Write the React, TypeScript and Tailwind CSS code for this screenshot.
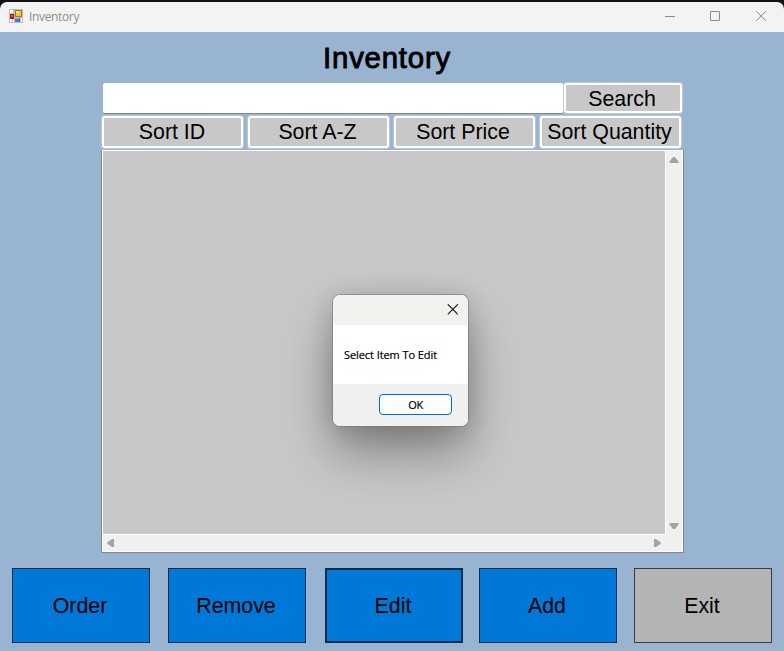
import type { ReactNode } from "react";

function AppIcon() {
  return (
    <svg width="14" height="14" viewBox="0 0 14 14" shapeRendering="crispEdges">
      <rect x="0" y="0" width="14" height="14" fill="#bdbdbd" />
      <rect x="1" y="1" width="3" height="3" fill="#f6f6f6" />
      <rect x="1" y="10" width="2" height="3" fill="#fff" />
      <rect x="4" y="10" width="1" height="3" fill="#fff" />
      <rect x="12" y="9" width="1" height="4" fill="#fff" />
      <rect x="6" y="1" width="7" height="7" fill="#a57a1c" />
      <rect x="7" y="2" width="5" height="5" fill="#f7c52c" />
      <rect x="7" y="2" width="3" height="2" fill="#fde07a" />
      <rect x="1" y="5" width="4" height="5" fill="#a81a10" />
      <rect x="2" y="6" width="2" height="2" fill="#e8604c" />
      <rect x="6" y="9" width="5" height="4" fill="#3f78dc" />
      <rect x="6" y="9" width="4" height="1" fill="#86aef2" />
    </svg>
  );
}

function TitleBar() {
  return (
    <header className="h-8 shrink-0 bg-[#12121a] pt-[2px]">
      <div className="flex h-[30px] items-center rounded-t-[7px] bg-[#f3f3f3] pl-[9px]">
        <span className="-mt-[2px]">
          <AppIcon />
        </span>
        <span className="ml-[6px] flex-1 font-['Open_Sans','Noto_Sans',sans-serif] text-[12px] leading-4 tracking-[-0.35px] text-[#8d8d8d]">
          Inventory
        </span>
        <svg width="119" height="12" viewBox="0 0 119 12" fill="none" stroke="#8b8b8b">
          <path d="M0 5.5h10" />
          <rect x="45.5" y="0.5" width="9" height="9" rx="0.4" />
          <path d="M91.3 0.2l9.6 9.6M100.9 0.2l-9.6 9.6" />
        </svg>
      </div>
    </header>
  );
}

function GreyButton({ children, className }: { children: ReactNode; className: string }) {
  return (
    <button
      className={`rounded-[3px] border-2 border-white bg-[#c8c8c8] text-center shadow-[0_0_1px_1px_rgba(225,232,240,0.45)] ${className}`}
    >
      {children}
    </button>
  );
}

function ActionButton({ children, className }: { children: ReactNode; className: string }) {
  return (
    <button className={`flex h-[75px] w-[138px] items-center justify-center pr-[2px] ${className}`}>
      {children}
    </button>
  );
}

function ItemList() {
  return (
    <div className="mt-[2px] ml-[101px] flex h-[403px] w-[583px] flex-col border border-t-0 border-[#848890]">
      <div className="flex flex-1 flex-col border border-white">
        <div className="flex flex-1">
          <div className="flex-1 border-r border-b border-white bg-[#c8c8c8]" />
          <div className="flex w-[16px] flex-col items-center justify-between bg-[#f0f0f0] pt-[6px] pb-[6px]">
            <svg width="10" height="6" viewBox="0 0 10 6">
              <path d="M4 0h2l3.5 4.5v1.5h-9V4.5z" fill="#a3a3a3" />
            </svg>
            <svg width="10" height="6" viewBox="0 0 10 6">
              <path d="M4 6h2l3.5-4.5V0h-9v1.5z" fill="#a3a3a3" />
            </svg>
          </div>
        </div>
        <div className="flex h-[16px] items-center justify-between bg-[#f0f0f0] pr-[21px] pl-[4px]">
          <svg width="7" height="8" viewBox="0 0 7 8">
            <path d="M0.3 3.2v1.6L5 8h2V0H5z" fill="#a3a3a3" />
          </svg>
          <svg width="7" height="8" viewBox="0 0 7 8">
            <path d="M6.7 3.2v1.6L2 8H0V0h2z" fill="#a3a3a3" />
          </svg>
        </div>
      </div>
    </div>
  );
}

function MessageDialog() {
  return (
    <div className="absolute top-[295px] left-[333px] flex h-[131px] w-[135px] flex-col overflow-hidden rounded-[7px] bg-white font-['Open_Sans','Noto_Sans',sans-serif] text-[11px] shadow-[0_0_0_1px_rgba(120,120,120,0.6),0_26px_50px_rgba(0,0,0,0.36),0_2px_26px_rgba(0,0,0,0.14)]">
      <div className="flex h-[30px] justify-end bg-[#f3f2ee] pt-[9px] pr-[10px]">
        <svg width="11" height="11" viewBox="0 0 11 11" fill="none" stroke="#1a1a1a" strokeWidth="1.1">
          <path d="M0.8 0.3l10 10M10.8 0.3l-10 10" />
        </svg>
      </div>
      <p className="h-[59px] pt-[22px] pl-[11px] leading-4 tracking-[-0.08px] whitespace-nowrap text-black [-webkit-text-stroke:0.2px_black]">
        Select Item To Edit
      </p>
      <div className="flex flex-1 justify-end bg-[#f0f0f0] pt-[10px] pr-[16px]">
        <button className="flex h-[21px] w-[73px] items-center justify-center rounded-[4px] border border-[#0071cb] bg-[#fdfdfd] tracking-[-0.3px] [-webkit-text-stroke:0.2px_black]">
          OK
        </button>
      </div>
    </div>
  );
}

export default function App() {
  return (
    <div className="relative flex h-[651px] w-[784px] flex-col overflow-hidden bg-[#99b4d1] font-['Liberation_Sans',Arial,sans-serif] text-[21.33px] leading-6 text-black">
      <TitleBar />
      <h1 className="h-[51px] pt-[10px] pr-[10px] text-center text-[29.33px] leading-8 font-normal tracking-[0.8px] [-webkit-text-stroke:0.9px_black]">
        Inventory
      </h1>
      <div className="ml-[103px] flex h-[31px]">
        <input
          aria-label="Search"
          className="h-[31px] w-[460px] rounded-[2px] border-b border-[#868686] bg-white px-2 outline-none"
        />
        <GreyButton className="ml-px h-[30px] w-[118px] pt-px pr-[2px]">Search</GreyButton>
      </div>
      <div className="mt-[2px] ml-[102px] flex h-[32px] gap-[5px]">
        <GreyButton className="w-[141px] pr-px pb-px">Sort ID</GreyButton>
        <GreyButton className="w-[141px] pr-[2px] pb-px">Sort A-Z</GreyButton>
        <GreyButton className="w-[141px] pr-[3px] pb-px">Sort Price</GreyButton>
        <GreyButton className="w-[141px] pr-[2px] pb-px whitespace-nowrap">Sort Quantity</GreyButton>
      </div>
      <ItemList />
      <footer className="mt-[15px] ml-[12px] flex">
        <ActionButton className="border border-[#062c50] bg-[#0078d7]">Order</ActionButton>
        <ActionButton className="ml-[18px] border border-[#062c50] bg-[#0078d7]">Remove</ActionButton>
        <ActionButton className="ml-[19px] border-2 border-[#062c50] bg-[#0078d7]">Edit</ActionButton>
        <ActionButton className="ml-[16px] border border-[#062c50] bg-[#0078d7]">Add</ActionButton>
        <ActionButton className="ml-[17px] border border-[#3c3c3c] bg-[#b4b4b4]">Exit</ActionButton>
      </footer>
      <MessageDialog />
    </div>
  );
}
